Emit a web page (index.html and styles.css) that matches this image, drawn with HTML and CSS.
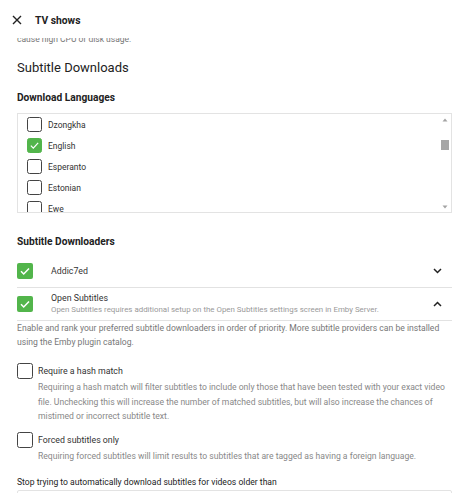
FILE: index.html
```html
<!DOCTYPE html>
<html lang="en">
<head>
<meta charset="utf-8">
<title>TV shows</title>
<link rel="stylesheet" href="styles.css">
</head>
<body>
<div class="app">
  <header class="topbar">
    <svg class="close-icon" width="10" height="10" viewBox="0 0 10 10"><path d="M1 1L9 9M9 1L1 9" stroke="#222" stroke-width="1.4" fill="none"/></svg>
    <span class="topbar-title">TV shows</span>
  </header>
  <main class="content">
    <p class="clipped">cause high CPU or disk usage.</p>
    <h2 class="section-title">Subtitle Downloads</h2>
    <h3 class="sub-title">Download Languages</h3>
    <div class="langbox">
      <div class="langlist">
        <div class="lang"><span class="box"></span>Dzongkha</div>
        <div class="lang"><span class="box checked"><svg viewBox="0 0 16 16"><path d="M3.5 8.2l3 3 6-6.4" stroke="#fff" stroke-width="1.5" fill="none"/></svg></span>English</div>
        <div class="lang"><span class="box"></span>Esperanto</div>
        <div class="lang"><span class="box"></span>Estonian</div>
        <div class="lang"><span class="box"></span>Ewe</div>
      </div>
      <div class="scrollbar">
        <svg class="arrow" width="6" height="4" viewBox="0 0 6 4"><path d="M3 0.5L5.5 3.5H0.5Z" fill="#a3a3a3"/></svg>
        <div class="track"><div class="thumb"></div></div>
        <svg class="arrow" width="6" height="4" viewBox="0 0 6 4"><path d="M3 3.5L5.5 0.5H0.5Z" fill="#a3a3a3"/></svg>
      </div>
    </div>

    <h3 class="sub-title downloaders-title">Subtitle Downloaders</h3>
    <div class="downloaders">
      <div class="dl-row">
        <span class="gbox"><svg viewBox="0 0 16 16"><path d="M4 8.3l2.7 2.7 5.3-5.6" stroke="#fff" stroke-width="1.5" fill="none"/></svg></span>
        <div class="dl-text"><div class="dl-name">Addic7ed</div></div>
        <svg class="chev" width="9" height="6" viewBox="0 0 9 6"><path d="M1 1l3.5 3.5L8 1" stroke="#222" stroke-width="1.5" fill="none"/></svg>
      </div>
      <div class="dl-row">
        <span class="gbox"><svg viewBox="0 0 16 16"><path d="M4 8.3l2.7 2.7 5.3-5.6" stroke="#fff" stroke-width="1.5" fill="none"/></svg></span>
        <div class="dl-text">
          <div class="dl-name">Open Subtitles</div>
          <div class="dl-desc">Open Subtitles requires additional setup on the Open Subtitles settings screen in Emby Server.</div>
        </div>
        <svg class="chev" width="9" height="6" viewBox="0 0 9 6"><path d="M1 5l3.5-3.5L8 5" stroke="#222" stroke-width="1.5" fill="none"/></svg>
      </div>
    </div>
    <p class="help">Enable and rank your preferred subtitle downloaders in order of priority. More subtitle providers can be installed using the Emby plugin catalog.</p>

    <div class="option">
      <label class="opt-label"><span class="obox"></span>Require a hash match</label>
      <p class="opt-desc">Requiring a hash match will filter subtitles to include only those that have been tested with your exact video file. Unchecking this will increase the number of matched subtitles, but will also increase the chances of mistimed or incorrect subtitle text.</p>
    </div>
    <div class="option option-2">
      <label class="opt-label"><span class="obox"></span>Forced subtitles only</label>
      <p class="opt-desc">Requiring forced subtitles will limit results to subtitles that are tagged as having a foreign language.</p>
    </div>
    <p class="field-label">Stop trying to automatically download subtitles for videos older than</p>
    <div class="input"></div>
  </main>
</div>
</body>
</html>
```
FILE: styles.css
```css
* { box-sizing: border-box; }
html, body { margin: 0; padding: 0; background: #fff; }
body { font-family: Roboto, "Liberation Sans", sans-serif; color: #222; }
.app { width: 474px; height: 493px; display: flex; flex-direction: column; overflow: hidden; }
.topbar { flex: none; height: 38px; display: flex; align-items: center; padding: 0 0 0 12px; gap: 13px; background: #fff; position: relative; z-index: 1; }
.close-icon { display: block; margin-top: 2px; }
.topbar-title { font-weight: 700; font-size: 10.3px; color: #222; margin-top: 2px; }
.content { flex: 1; overflow: hidden; padding: 0 22px 0 17px; }
.clipped { margin: -6px 0 0; font-size: 8.5px; line-height: 14px; color: #777; }
.section-title { margin: 12px 0 0; font-size: 13px; font-weight: 400; line-height: 20px; color: #222; }
.sub-title { margin: 13px 0 0; font-size: 10.2px; font-weight: 700; line-height: 14px; color: #222; }
.langbox { margin-top: 8px; height: 100px; border: 1px solid #e3e3e3; display: flex; overflow: hidden; }
.langlist { flex: 1; padding-left: 9px; }
.lang { height: 21px; display: flex; align-items: center; gap: 6px; font-size: 8.5px; color: #333; }
.box { width: 15px; height: 15px; border: 1.3px solid #444; border-radius: 2.5px; flex: none; }
.box.checked { background: #52b54b; border-color: #52b54b; }
.box svg, .gbox svg { display: block; width: 100%; height: 100%; }
.scrollbar { width: 10px; display: flex; flex-direction: column; align-items: center; padding: 4px 0 3px; margin-right: 1px; }
.arrow { flex: none; }
.track { flex: 1; width: 100%; padding-top: 18px; }
.thumb { width: 8px; height: 10px; background: #a6a6a6; margin-left: 1px; }
.downloaders-title { margin-top: 22px; }
.downloaders { margin-top: 6px; }
.dl-row { display: flex; align-items: center; border-bottom: 1px solid #e2e2e2; height: 33px; padding-right: 10px; }
.gbox { width: 16px; height: 16px; border-radius: 2px; background: #52b54b; flex: none; }
.dl-text { flex: 1; padding-left: 18px; }
.dl-name { font-size: 8.8px; color: #333; line-height: 12px; }
.dl-desc { font-size: 7.9px; color: #999; line-height: 12px; }
.chev { flex: none; }
.help { margin: 0; font-size: 8.6px; line-height: 14px; color: #777; }
.option { margin-top: 14px; }
.option-2 { margin-top: 8px; }
.opt-label { display: flex; align-items: center; gap: 5px; font-size: 8.8px; color: #333; height: 16px; }
.obox { width: 16px; height: 16px; border: 1.3px solid #444; border-radius: 2.5px; flex: none; }
.opt-desc { margin: 1px 0 0 21px; font-size: 8.6px; line-height: 14.5px; color: #888; }
.field-label { margin: 12px 0 0; font-size: 8.6px; line-height: 14px; color: #222; }
.input { margin-top: 1px; height: 30px; border: 1px solid #e3e3e3; border-radius: 2px; }
```
